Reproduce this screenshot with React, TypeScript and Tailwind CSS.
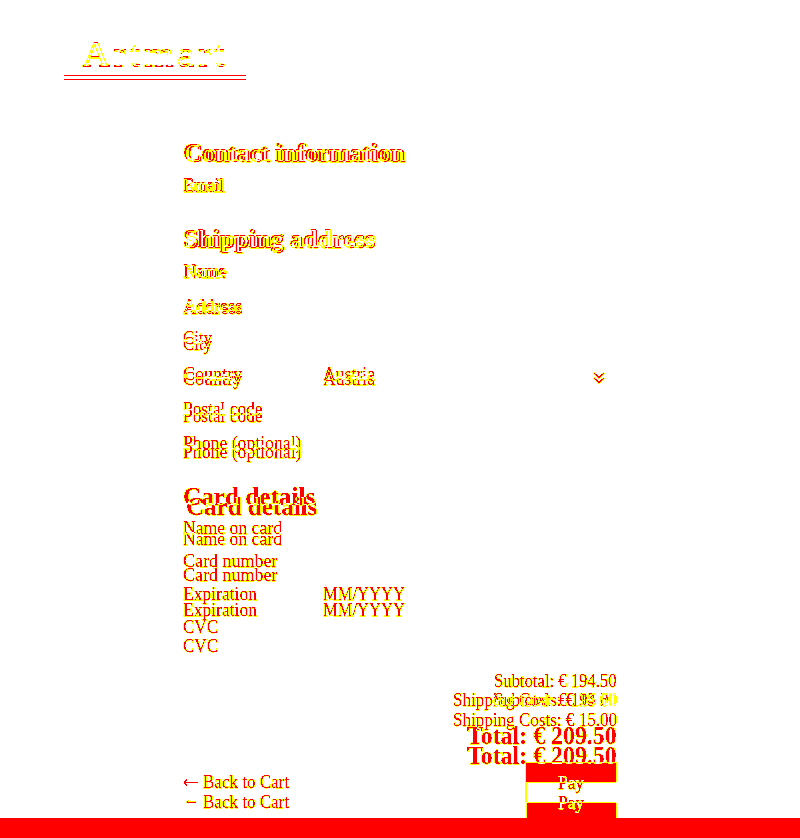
import { useLayoutEffect, useRef, useState } from "react";

// Checkout page comparison: two revisions are blended with "difference",
// then the result is thresholded to white / yellow / red.

type FitProps = { text: string; width: number; className?: string; right?: boolean };

// Text stretched horizontally to a given width.
function Fit({ text, width, className = "", right }: FitProps) {
  const ref = useRef<HTMLSpanElement>(null);
  const [scale, setScale] = useState(1);
  useLayoutEffect(() => {
    if (ref.current) setScale(width / ref.current.offsetWidth);
  }, [width]);
  return (
    <span
      ref={ref}
      className={`inline-block whitespace-pre leading-none ${right ? "origin-right" : "origin-left"} ${className}`}
      style={{ transform: `scaleX(${scale})` }}
    >
      {text}
    </span>
  );
}

type Row = { text: string; width: number; h: string; big?: boolean; shift?: string; value?: string; valueWidth?: number; chevron?: boolean };

type Revision = {
  logo: string;
  rules: boolean;
  rows: Row[];
  sums: { text: string; width: number; h: string; total?: boolean }[];
  footer: string;
  backPad: string;
  arrow: string;
  arrowPath: string;
  button: string;
};

const before: Revision = {
  logo: "h-[72px]",
  rules: true,
  rows: [
    { text: "Contact information", width: 221, h: "h-[85px]", big: true },
    { text: "Email", width: 41, h: "h-[29px]" },
    { text: "Shipping address", width: 192, h: "h-[57px]", big: true },
    { text: "Name", width: 43, h: "h-[29px]" },
    { text: "Address", width: 59, h: "h-[35px]" },
    { text: "City", width: 29, h: "h-[32px]" },
    { text: "Country", width: 59, h: "h-[36px]", value: "Austria", valueWidth: 52, chevron: true },
    { text: "Postal code", width: 80, h: "h-[35px]" },
    { text: "Phone (optional)", width: 118, h: "h-[34px]" },
    { text: "Card details", width: 132, h: "h-[57px]", big: true },
    { text: "Name on card", width: 99, h: "h-[28px]" },
    { text: "Card number", width: 94, h: "h-[33px]" },
    { text: "Expiration", width: 74, h: "h-[33px]", value: "MM/YYYY", valueWidth: 82 },
    { text: "CVC", width: 35, h: "h-[33px]" },
  ],
  sums: [
    { text: "Subtotal: € 194.50", width: 123, h: "h-[54px]" },
    { text: "Shipping Costs: € 15.00", width: 164, h: "h-[19px]" },
    { text: "Total: € 209.50", width: 150, h: "h-[39px]", total: true },
  ],
  footer: "h-[56px] pt-[14px]",
  backPad: "pt-[11px]",
  arrow: "",
  arrowPath: "M15 9.5 H1 M4 6.5 L1 9.5 L4 12.5",
  button: "w-[92px]",
};

const after: Revision = {
  logo: "h-[73px]",
  rules: false,
  rows: [
    { text: "Contact information", width: 221, h: "h-[86px]", big: true, shift: "pl-[2px]" },
    { text: "Email", width: 41, h: "h-[29px]", shift: "pl-[1px]" },
    { text: "Shipping address", width: 191, h: "h-[57px]", big: true, shift: "pl-[2px]" },
    { text: "Name", width: 43, h: "h-[29px]", shift: "pl-[1px]" },
    { text: "Address", width: 59, h: "h-[36px]", shift: "pl-[0.5px]" },
    { text: "City", width: 29, h: "h-[36px]" },
    { text: "Country", width: 59, h: "h-[35px]", value: "Austria", valueWidth: 52, chevron: true },
    { text: "Postal code", width: 80, h: "h-[37px]" },
    { text: "Phone (optional)", width: 118, h: "h-[36px]" },
    { text: "Card details", width: 131, h: "h-[58px]", big: true, shift: "pl-[3px]" },
    { text: "Name on card", width: 99, h: "h-[29px]" },
    { text: "Card number", width: 94, h: "h-[36px]" },
    { text: "Expiration", width: 74, h: "h-[35px]", value: "MM/YYYY", valueWidth: 82 },
    { text: "CVC", width: 35, h: "h-[36px]" },
  ],
  sums: [
    { text: "Subtotal: € 194.50", width: 123, h: "h-[54px]" },
    { text: "Shipping Costs: € 15.00", width: 164, h: "h-[20px]" },
    { text: "Total: € 209.50", width: 150, h: "h-[39px]", total: true },
  ],
  footer: "h-[55px] pt-[14px]",
  backPad: "pt-[11px]",
  arrow: "pl-[2px]",
  arrowPath: "M11 9.4 H1.5 M3.5 7.6 L1.5 9.4",
  button: "w-[91px]",
};

function Chevron() {
  return (
    <svg width="12" height="7" viewBox="0 0 12 7" className="mb-[4px] ml-auto mr-[12px]" fill="none" stroke="black" strokeWidth="1.5">
      <path d="M1 1 L6 5.5 L11 1" />
    </svg>
  );
}

function Page({ r }: { r: Revision }) {
  return (
    <div className="flex h-[838px] w-[800px] flex-col overflow-hidden bg-white text-black">
      <header className="ml-[64px] h-[80px] w-[182px]">
        <div className={`flex items-end pl-[18px] ${r.logo}`}>
          <Fit text="Artmart" width={146} className="text-[36px] tracking-[3px]" />
        </div>
        {r.rules && <div className="mt-[3px] h-[5px] border-y border-black" />}
      </header>
      <main className="ml-[183px] w-[434px] [-webkit-text-stroke:0.25px_currentColor]">
        {r.rows.map((row) => (
          <div key={row.text} className={`flex items-end ${row.h} ${row.shift ?? ""}`}>
            <div className="flex w-[140px] shrink-0">
              <Fit text={row.text} width={row.width} className={row.big ? "text-[25px] font-bold" : "text-[18px]"} />
            </div>
            {row.value && <Fit text={row.value} width={row.valueWidth ?? 50} className="text-[18px]" />}
            {row.chevron && <Chevron />}
          </div>
        ))}
        {r.sums.map((s) => (
          <div key={s.text} className={`flex items-end justify-end ${s.h}`}>
            <Fit right text={s.text} width={s.width} className={s.total ? "text-[25px] font-bold" : "text-[18px]"} />
          </div>
        ))}
        <div className={`flex items-start justify-between ${r.footer}`}>
          <div className={`flex items-end ${r.backPad}`}>
            <div className={`flex w-[20px] items-center ${r.arrow}`}>
              <svg width="16" height="18" viewBox="0 0 16 18" className="shrink-0" fill="none" stroke="currentColor" strokeWidth="1.2">
                <path d={r.arrowPath} />
              </svg>
            </div>
            <Fit text="Back to Cart" width={86} className="text-[18px]" />
          </div>
          <div className={`flex h-[41px] items-center justify-center border border-[#777] bg-black text-white ${r.button}`}>
            <Fit text="Pay" width={26} className="text-[18px]" />
          </div>
        </div>
      </main>
    </div>
  );
}

export default function App() {
  return (
    <div className="h-[838px] w-[800px] overflow-hidden bg-white font-['Liberation_Serif',serif]">
      <svg width="0" height="0" className="absolute">
        <filter id="threshold" x="0" y="0" width="1" height="1" colorInterpolationFilters="sRGB">
          <feComponentTransfer>
            <feFuncR type="discrete" tableValues="1 1" />
            <feFuncG type="discrete" tableValues="1 1 1 1 1 1 1 0 0 0" />
            <feFuncB type="discrete" tableValues="1 0 0 0 0 0 0 0 0 0" />
          </feComponentTransfer>
        </filter>
      </svg>
      <div className="isolate grid [filter:url(#threshold)]">
        <div className="col-start-1 row-start-1">
          <Page r={before} />
        </div>
        <div className="col-start-1 row-start-1 mix-blend-difference">
          <Page r={after} />
        </div>
        <div className="z-10 col-start-1 row-start-1 h-[20px] self-end bg-white" />
      </div>
    </div>
  );
}
